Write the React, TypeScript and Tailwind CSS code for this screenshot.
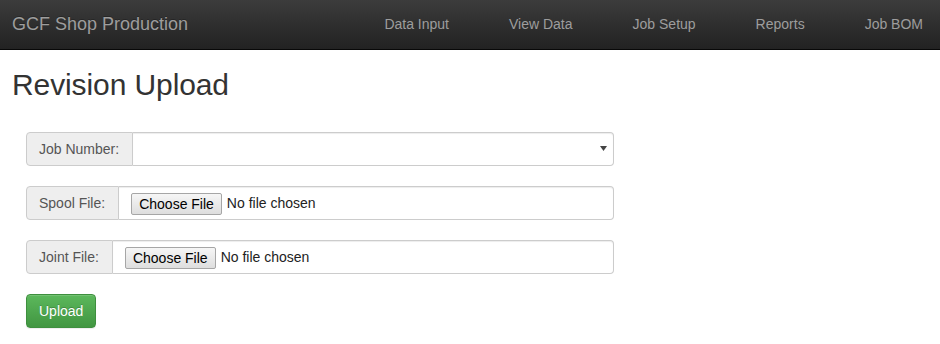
import { useState } from 'react'

const navItems = ['Data Input', 'View Data', 'Job Setup', 'Reports', 'Job BOM']

function FileRow({ label }: { label: string }) {
  const [name] = useState<string | null>(null)
  return (
    <div className="flex h-[34px] w-[588px]">
      <span className="flex items-center pl-3 pr-[13px] bg-[#eeeeee] border border-[#cccccc] rounded-l-[4px] text-[14px] text-[#555555]">
        {label}
      </span>
      <div className="flex-1 flex items-center pl-3 border border-l-0 border-[#cccccc] rounded-r-[4px] bg-white shadow-[inset_0_1px_1px_rgba(0,0,0,0.075)]">
        <button
          type="button"
          className="h-[22px] mt-[1px] px-[7px] border border-[#a6a6a6] rounded-[2px] bg-gradient-to-b from-[#f6f6f6] to-[#dedede] text-[14px] text-black leading-none"
        >
          Choose File
        </button>
        <span className="ml-[5px] mt-[1px] text-[14px] text-[#222222]">{name ?? 'No file chosen'}</span>
      </div>
    </div>
  )
}

export default function App() {
  const [job, setJob] = useState('')

  return (
    <div className="min-h-[344px] bg-white font-['Liberation_Sans',Arial,sans-serif] text-[#333333]">
      <nav className="h-[50px] flex items-center bg-gradient-to-b from-[#3c3c3c] to-[#222222] border-b border-[#080808]">
        <span className="pl-[12px] text-[18px] text-[#9d9d9d] [text-shadow:0_-1px_0_rgba(0,0,0,0.25)]">
          GCF Shop Production
        </span>
        <ul className="ml-auto flex text-[14px] text-[#9d9d9d] pr-[2px]">
          {navItems.map((item, i) => (
            <li
              key={item}
              className={i === navItems.length - 1 ? 'pl-[30px] pr-[15px]' : 'px-[30px]'}
            >
              {item}
            </li>
          ))}
        </ul>
      </nav>

      <h2 className="mt-[18px] ml-[12px] text-[30px] leading-[33px] font-normal tracking-[-0.1px] text-[#333333]">Revision Upload</h2>

      <form className="mt-[31px] ml-[26px] flex flex-col gap-[20px]">
        <div className="flex h-[34px] w-[588px]">
          <span className="flex items-center pl-3 pr-[13px] bg-[#eeeeee] border border-[#cccccc] rounded-l-[4px] text-[14px] text-[#555555]">
            Job Number:
          </span>
          <div className="relative flex-1">
            <select
              value={job}
              onChange={(e) => setJob(e.target.value)}
              className="w-full h-full appearance-none border border-l-0 border-[#cccccc] rounded-r-[4px] bg-white px-3 text-[14px] text-[#555555] shadow-[inset_0_1px_1px_rgba(0,0,0,0.075)]"
            >
              <option value=""></option>
            </select>
            <svg className="absolute right-[7px] top-[14px] pointer-events-none" width="7" height="5" viewBox="0 0 7 5">
              <path d="M0 0 H7 L3.5 5 Z" fill="#444444" />
            </svg>
          </div>
        </div>

        <FileRow label="Spool File:" />
        <FileRow label="Joint File:" />

        <div>
          <button
            type="button"
            className="h-[34px] px-3 text-[14px] text-white rounded-[4px] border border-[#3e8f3e] bg-gradient-to-b from-[#5cb85c] to-[#419641] shadow-[inset_0_1px_0_rgba(255,255,255,0.15),0_1px_1px_rgba(0,0,0,0.075)] [text-shadow:0_-1px_0_rgba(0,0,0,0.2)]"
          >
            Upload
          </button>
        </div>
      </form>
    </div>
  )
}
